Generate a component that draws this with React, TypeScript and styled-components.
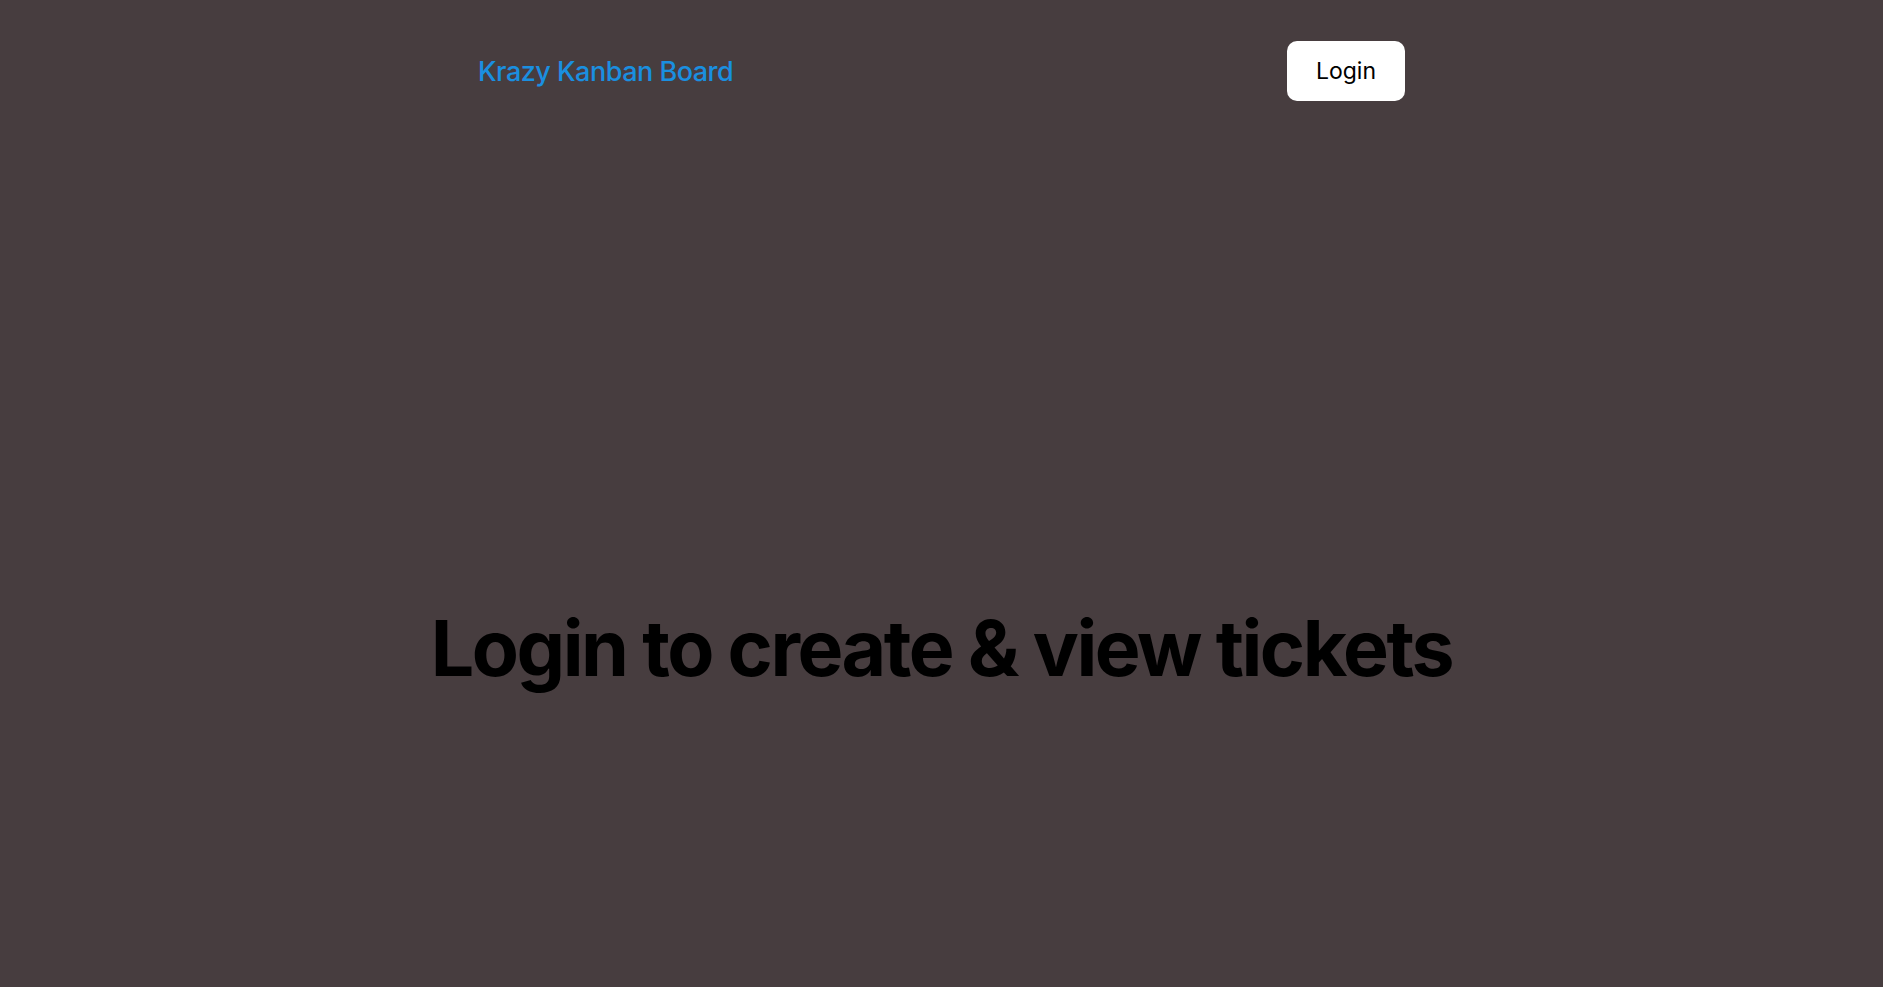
import React from "react";
import styled, { createGlobalStyle } from "styled-components";

const Global = createGlobalStyle`
  html, body { margin: 0; padding: 0; }
  body {
    background: #473d3f;
    font-family: Inter, "Noto Sans", sans-serif;
    min-height: 100vh;
  }
`;

const Page = styled.div`
  min-height: 987px;
  display: flex;
  flex-direction: column;
`;

const Nav = styled.nav`
  width: 927px;
  margin: 0 auto;
  padding-top: 41px;
  display: flex;
  align-items: center;
  justify-content: space-between;
`;

const Brand = styled.a`
  color: #1a8fe0;
  font-size: 27px;
  font-weight: 500;
  text-decoration: none;
  letter-spacing: -0.5px;
`;

const LoginButton = styled.button`
  width: 118px;
  height: 60px;
  border: none;
  border-radius: 10px;
  background: #ffffff;
  color: #000;
  font-family: Inter, sans-serif;
  font-size: 23px;
  font-weight: 400;
  cursor: pointer;
`;

const Main = styled.main`
  flex: 1;
  display: flex;
  align-items: center;
  justify-content: center;
  padding-top: 208px;
`;

const Heading = styled.h1`
  margin: 0;
  color: #000;
  font-size: 77px;
  font-weight: 700;
  letter-spacing: -2.5px;
`;

export default function App() {
  return (
    <>
      <Global />
      <Page>
        <Nav>
          <Brand href="#">Krazy Kanban Board</Brand>
          <LoginButton>Login</LoginButton>
        </Nav>
        <Main>
          <Heading>Login to create &amp; view tickets</Heading>
        </Main>
      </Page>
    </>
  );
}
